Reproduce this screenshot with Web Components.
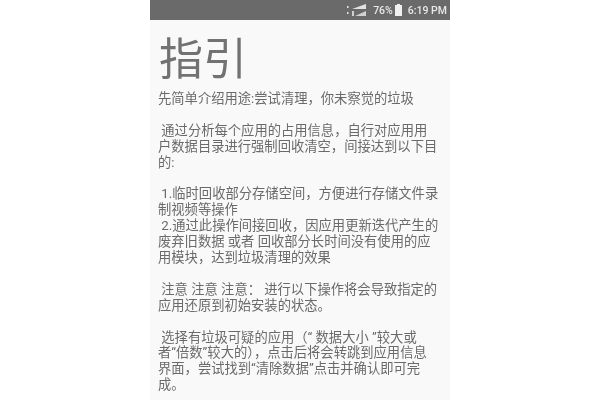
<!DOCTYPE html>
<html lang="zh-CN">
<head>
<meta charset="utf-8">
<title>指引</title>
<style>
html,body{margin:0;height:400px;overflow:hidden;background:#fff}
</style>
</head>
<body>
<phone-screen>
  <status-bar battery="76%" time="6:19 PM"></status-bar>
  <guide-page heading="指引">
    <guide-para>先简单介绍用途:尝试清理，你未察觉的垃圾</guide-para>
    <guide-para> 通过分析每个应用的占用信息，自行对应用用
户数据目录进行强制回收清空，间接达到以下目
的:</guide-para>
    <guide-para> 1.临时回收部分存储空间，方便进行存储文件录
制视频等操作
 2.通过此操作间接回收，因应用更新迭代产生的
废弃旧数据 或者 回收部分长时间没有使用的应
用模块，达到垃圾清理的效果</guide-para>
    <guide-para> 注意 注意 注意： 进行以下操作将会导致指定的
应用还原到初始安装的状态。</guide-para>
    <guide-para> 选择有垃圾可疑的应用（“ 数据大小 ”较大或
者“倍数”较大的），点击后将会转跳到应用信息
界面，尝试找到“清除数据”点击并确认即可完
成。</guide-para>
  </guide-page>
</phone-screen>
<script>
class PhoneScreen extends HTMLElement{
  constructor(){super();this.attachShadow({mode:'open'}).innerHTML=`<style>
    :host{display:flex;flex-direction:column;width:300px;height:400px;margin:0 auto;background:#f9f9f9;overflow:hidden;font-family:Roboto,"Noto Sans CJK SC",sans-serif}
  </style><slot></slot>`;}
}
class StatusBar extends HTMLElement{
  constructor(){super();const r=this.attachShadow({mode:'open'});
  r.innerHTML=`<style>
    :host{display:flex;flex:none;align-items:center;justify-content:flex-end;height:20px;background:#6a6a6a;color:#e8e8e8;font:500 10.5px Roboto,sans-serif;padding-right:3px;box-sizing:border-box;filter:blur(.35px)}
    svg{display:block}
    .sig{margin-right:6px}
    .bat{margin:0 6px 0 2px}
  </style>
  <svg class="sig" width="20" height="14" viewBox="0 0 20 14" fill="#e2e2e2">
    <rect x="0" y="3" width="1.5" height="2"/><rect x="0" y="9" width="1.5" height="2"/>
    <path d="M5 6h14V1z"/><path d="M5 8h2v5H5zM8 13h11V8z" opacity=".85"/>
  </svg>
  <span id="b"></span>
  <svg class="bat" width="7" height="12" viewBox="0 0 7 12" fill="#f0f0f0"><path d="M2 0h3v1h2v11H0V1h2z"/></svg>
  <span id="t"></span>`;
  r.getElementById('b').textContent=this.getAttribute('battery');
  r.getElementById('t').textContent=this.getAttribute('time');}
}
class GuidePage extends HTMLElement{
  constructor(){super();const r=this.attachShadow({mode:'open'});
  r.innerHTML=`<style>
    :host{display:flex;flex-direction:column;padding:12px 0 0 8px;color:#6a6a6a;filter:blur(.35px)}
    h1{margin:0 0 3px 1px;font:400 44px/56px Roboto,"Noto Sans CJK SC",sans-serif;color:#727272}
    .body{display:flex;flex-direction:column;gap:15.9px}
  </style><h1></h1><div class="body"><slot></slot></div>`;
  r.querySelector('h1').textContent=this.getAttribute('heading');}
}
class GuidePara extends HTMLElement{
  constructor(){super();this.attachShadow({mode:'open'}).innerHTML=`<style>
    :host{display:block;white-space:pre;font:13.3px/15.9px Roboto,"Noto Sans CJK SC",sans-serif}
  </style><slot></slot>`;}
}
customElements.define('phone-screen',PhoneScreen);
customElements.define('status-bar',StatusBar);
customElements.define('guide-page',GuidePage);
customElements.define('guide-para',GuidePara);
</script>
</body>
</html>
